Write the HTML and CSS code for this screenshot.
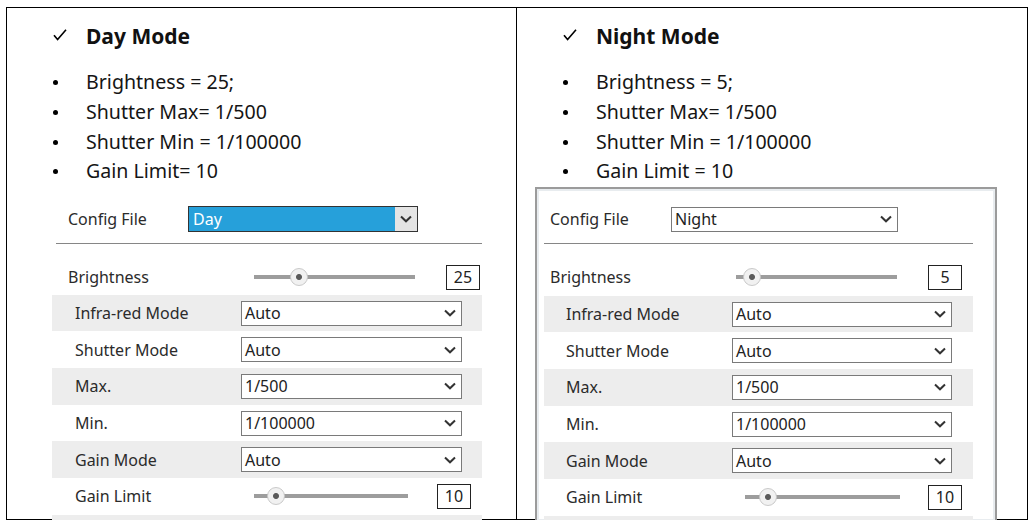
FILE: index.html
```html
<!DOCTYPE html>
<html lang="en">
<head>
    <meta charset="UTF-8">
    <title>Day / Night Mode</title>
    <link rel="stylesheet" href="styles.css">
</head>
<body>

<div class="sheet">
    <div class="cell">
        <h2 class="mode-title">
            <svg class="check" width="14" height="12" viewBox="0 0 14 12"><path d="M1 6.2 L4.6 10.6 L13 0.8" fill="none" stroke="#000" stroke-width="1.6"/></svg>
            Day Mode
        </h2>
        <ul class="settings">
            <li>Brightness = 25;</li>
            <li>Shutter Max= 1/500</li>
            <li>Shutter Min = 1/100000</li>
            <li>Gain Limit= 10</li>
        </ul>

        <div class="panel panel-day">
            <div class="config-row">
                <span class="config-label">Config File</span>
                <div class="select select-active">
                    <span>Day</span>
                    <span class="select-arrow"><svg width="12" height="8" viewBox="0 0 12 8"><path d="M1 1.5 L6 6.3 L11 1.5" fill="none" stroke="#333" stroke-width="2"/></svg></span>
                </div>
            </div>
            <div class="divider"></div>
            <div class="slider-row top-slider">
                <span class="slider-label">Brightness</span>
                <div class="track"><span class="thumb" style="left: 36px"></span></div>
                <span class="value-box">25</span>
            </div>
            <div class="rows">
                <div class="row">
                    <span class="row-label">Infra-red Mode</span>
                    <div class="select"><span>Auto</span><svg width="12" height="8" viewBox="0 0 12 8"><path d="M1 1.5 L6 6.3 L11 1.5" fill="none" stroke="#333" stroke-width="2"/></svg></div>
                </div>
                <div class="row">
                    <span class="row-label">Shutter Mode</span>
                    <div class="select"><span>Auto</span><svg width="12" height="8" viewBox="0 0 12 8"><path d="M1 1.5 L6 6.3 L11 1.5" fill="none" stroke="#333" stroke-width="2"/></svg></div>
                </div>
                <div class="row">
                    <span class="row-label">Max.</span>
                    <div class="select"><span>1/500</span><svg width="12" height="8" viewBox="0 0 12 8"><path d="M1 1.5 L6 6.3 L11 1.5" fill="none" stroke="#333" stroke-width="2"/></svg></div>
                </div>
                <div class="row">
                    <span class="row-label">Min.</span>
                    <div class="select"><span>1/100000</span><svg width="12" height="8" viewBox="0 0 12 8"><path d="M1 1.5 L6 6.3 L11 1.5" fill="none" stroke="#333" stroke-width="2"/></svg></div>
                </div>
                <div class="row">
                    <span class="row-label">Gain Mode</span>
                    <div class="select"><span>Auto</span><svg width="12" height="8" viewBox="0 0 12 8"><path d="M1 1.5 L6 6.3 L11 1.5" fill="none" stroke="#333" stroke-width="2"/></svg></div>
                </div>
                <div class="row slider-row">
                    <span class="slider-label">Gain Limit</span>
                    <div class="track"><span class="thumb" style="left: 13px"></span></div>
                    <span class="value-box">10</span>
                </div>
                <div class="row"></div>
            </div>
        </div>
    </div>

    <div class="cell">
        <h2 class="mode-title">
            <svg class="check" width="14" height="12" viewBox="0 0 14 12"><path d="M1 6.2 L4.6 10.6 L13 0.8" fill="none" stroke="#000" stroke-width="1.6"/></svg>
            Night Mode
        </h2>
        <ul class="settings">
            <li>Brightness = 5;</li>
            <li>Shutter Max= 1/500</li>
            <li>Shutter Min = 1/100000</li>
            <li>Gain Limit = 10</li>
        </ul>

        <div class="panel panel-night">
            <div class="config-row">
                <span class="config-label">Config File</span>
                <div class="select">
                    <span>Night</span>
                    <svg width="12" height="8" viewBox="0 0 12 8"><path d="M1 1.5 L6 6.3 L11 1.5" fill="none" stroke="#333" stroke-width="2"/></svg>
                </div>
            </div>
            <div class="divider"></div>
            <div class="slider-row top-slider">
                <span class="slider-label">Brightness</span>
                <div class="track"><span class="thumb" style="left: 7px"></span></div>
                <span class="value-box">5</span>
            </div>
            <div class="rows">
                <div class="row">
                    <span class="row-label">Infra-red Mode</span>
                    <div class="select"><span>Auto</span><svg width="12" height="8" viewBox="0 0 12 8"><path d="M1 1.5 L6 6.3 L11 1.5" fill="none" stroke="#333" stroke-width="2"/></svg></div>
                </div>
                <div class="row">
                    <span class="row-label">Shutter Mode</span>
                    <div class="select"><span>Auto</span><svg width="12" height="8" viewBox="0 0 12 8"><path d="M1 1.5 L6 6.3 L11 1.5" fill="none" stroke="#333" stroke-width="2"/></svg></div>
                </div>
                <div class="row">
                    <span class="row-label">Max.</span>
                    <div class="select"><span>1/500</span><svg width="12" height="8" viewBox="0 0 12 8"><path d="M1 1.5 L6 6.3 L11 1.5" fill="none" stroke="#333" stroke-width="2"/></svg></div>
                </div>
                <div class="row">
                    <span class="row-label">Min.</span>
                    <div class="select"><span>1/100000</span><svg width="12" height="8" viewBox="0 0 12 8"><path d="M1 1.5 L6 6.3 L11 1.5" fill="none" stroke="#333" stroke-width="2"/></svg></div>
                </div>
                <div class="row">
                    <span class="row-label">Gain Mode</span>
                    <div class="select"><span>Auto</span><svg width="12" height="8" viewBox="0 0 12 8"><path d="M1 1.5 L6 6.3 L11 1.5" fill="none" stroke="#333" stroke-width="2"/></svg></div>
                </div>
                <div class="row slider-row">
                    <span class="slider-label">Gain Limit</span>
                    <div class="track"><span class="thumb" style="left: 14px"></span></div>
                    <span class="value-box">10</span>
                </div>
                <div class="row"></div>
            </div>
        </div>
    </div>
</div>

</body>
</html>
```

FILE: styles.css
```css
body {
    margin: 0;
    background-color: white;
    font-family: "Noto Sans", "Open Sans", sans-serif;
    color: #000;
}
.sheet {
    box-sizing: border-box;
    margin: 7px 0 0 6px;
    width: 1022px;
    height: 513px;
    border: 1px solid #000;
    display: grid;
    grid-template-columns: 509px 1fr;
}
.cell {
    padding-top: 13px;
    min-width: 0;
}
.cell:first-child {
    overflow: hidden;
}
.cell + .cell {
    border-left: 1px solid #000;
}
.mode-title {
    display: flex;
    align-items: center;
    margin: 0;
    padding-left: 46px;
    height: 30px;
    font-size: 21px;
    font-weight: bold;
    color: #111;
}
.check {
    margin-right: 19px;
    margin-top: -2px;
}
.settings {
    list-style: none;
    margin: 16px 0 0 0;
    padding: 0;
}
.settings li {
    display: flex;
    align-items: center;
    height: 29.7px;
    padding-left: 46px;
    font-size: 19.6px;
    color: #151515;
}
.settings li::before {
    content: "";
    width: 5px;
    height: 5px;
    border-radius: 50%;
    background-color: #000;
    margin-right: 28px;
    margin-top: 2px;
}
.panel {
    font-size: 16px;
    color: #2b2b2b;
}
.panel-day {
    margin: 21px 0 0 45px;
    width: 430px;
}
.panel-night {
    position: relative;
    box-sizing: border-box;
    margin: 1px 0 0 18px;
    width: 462px;
    height: 336px;
    padding: 18px 22px 0 7px;
    border: 2px solid #9b9b9b;
    box-shadow: inset 0 0 0 2px #e8ecef;
    background-color: white;
    overflow: hidden;
}
.config-row {
    display: flex;
    align-items: center;
    height: 25px;
}
.config-label {
    width: 120px;
}
.panel-day .config-label {
    padding-left: 16px;
}
.panel-night .config-label {
    padding-left: 6px;
    width: 121px;
}
.panel-day .config-row .select {
    width: 230px;
    height: 26px;
}
.panel-night .config-row .select {
    width: 227px;
}
.divider {
    height: 1px;
    margin-top: 11px;
    background-color: #868686;
}
.panel-day .divider {
    margin-left: 4px;
}
.slider-row {
    display: flex;
    align-items: center;
}
.top-slider {
    height: 25px;
    margin-top: 21px;
}
.slider-label {
    width: 186px;
}
.panel-day .top-slider .slider-label {
    padding-left: 16px;
}
.panel-night .top-slider .slider-label {
    padding-left: 6px;
}
.track {
    position: relative;
    width: 161px;
    height: 4px;
    background-color: #9d9d9d;
}
.thumb {
    position: absolute;
    top: -7px;
    box-sizing: border-box;
    width: 18px;
    height: 18px;
    border: 1px solid #c9c9c9;
    border-radius: 50%;
    background: radial-gradient(circle, #5a5a5a 0 2.5px, #f1f1f1 3.5px);
}
.value-box {
    box-sizing: border-box;
    width: 34px;
    height: 25px;
    margin-left: 31px;
    border: 1px solid #222;
    text-align: center;
    line-height: 23px;
    color: #222;
}
.rows {
    margin-top: 5px;
}
.panel-night .rows {
    margin-top: 6px;
}
.row {
    display: flex;
    align-items: center;
    height: 36.67px;
    padding-left: 23px;
}
.panel-night .row {
    padding-left: 22px;
}
.row:nth-child(odd) {
    background-color: #ededed;
}
.row-label {
    width: 166px;
}
.row .slider-label {
    width: 179px;
}
.row .track {
    width: 154px;
}
.row .value-box {
    margin-left: 29px;
}
.panel-night .row .track {
    width: 155px;
}
.panel-night .row .value-box {
    margin-left: 28px;
}
.select {
    box-sizing: border-box;
    display: flex;
    align-items: center;
    justify-content: space-between;
    width: 221px;
    height: 25px;
    padding: 0 5px 0 3px;
    border: 1px solid #7a7a7a;
    background-color: white;
    color: #222;
}
.panel-night .row .select {
    width: 220px;
}
.select-active {
    padding: 0;
    border-color: #333;
    background-color: #26a0da;
    color: white;
}
.select-active span:first-child {
    padding-left: 4px;
}
.select-arrow {
    display: flex;
    align-items: center;
    justify-content: center;
    width: 22px;
    height: 100%;
    background-color: #e4e4e4;
}
```
